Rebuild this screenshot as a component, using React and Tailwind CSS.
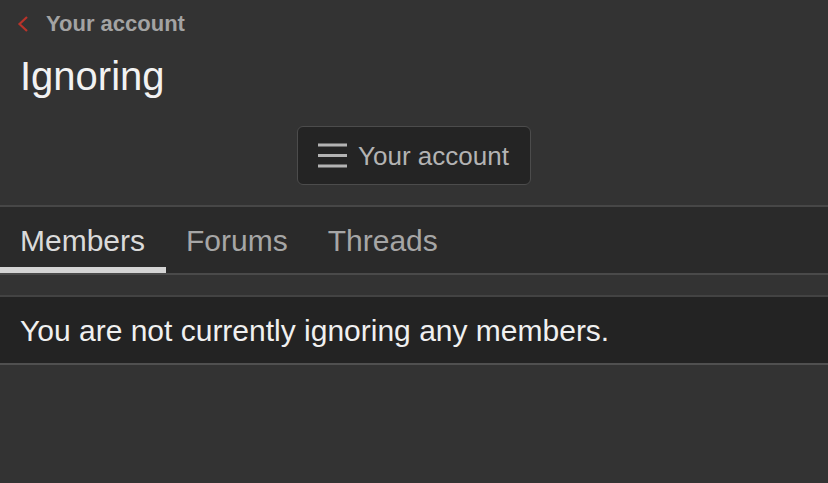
export default function App() {
  return (
    <div className="min-h-screen bg-[#333333] font-['Liberation_Sans',Arial,sans-serif]">
      {/* breadcrumb */}
      <div className="flex items-center h-[46px] pl-[16px] pr-5 pt-px">
        <svg width="14" height="18" viewBox="0 0 14 18" className="mr-[16px]">
          <path d="M11 2 L3.5 9 L11 16" fill="none" stroke="#b8332a" strokeWidth="2.2" />
        </svg>
        <span className="text-[22px] font-bold text-[#a3a3a3] leading-none">Your account</span>
      </div>

      {/* title */}
      <h1 className="px-5 text-[40px] leading-[60px] text-[#f2f2f2]">Ignoring</h1>

      {/* menu button */}
      <div className="flex justify-center pt-[20px] pb-[20px]">
        <button className="flex items-center h-[59px] pl-5 pr-[21px] gap-[11px] rounded-md bg-[#242424] border border-[#4c4c4c]">
          <svg width="29" height="25" viewBox="0 0 29 25">
            <rect x="0" y="0.5" width="29" height="3" fill="#b3b3b3" />
            <rect x="0" y="11" width="29" height="3" fill="#b3b3b3" />
            <rect x="0" y="21.5" width="29" height="3" fill="#b3b3b3" />
          </svg>
          <span className="text-[26px] text-[#b3b3b3] leading-none">Your account</span>
        </button>
      </div>

      {/* tabs */}
      <div className="border-t-2 border-[#474747] bg-[#2a2a2a] border-b-2 border-b-[#4a4a4a]">
        <div className="flex h-[66px]">
          <div className="flex items-center pl-5 pr-[21px] pt-[6px] border-b-[6px] border-[#d4d4d4] text-[30px] text-[#dadada]">
            Members
          </div>
          <div className="flex items-center px-5 pt-[6px] border-b-[6px] border-transparent text-[30px] text-[#a6a6a6]">
            Forums
          </div>
          <div className="flex items-center px-5 pt-[6px] border-b-[6px] border-transparent text-[30px] text-[#a6a6a6]">
            Threads
          </div>
        </div>
      </div>

      {/* message */}
      <div className="mt-[20px] border-t-2 border-[#434343] bg-[#232323] border-b-2 border-b-[#505050]">
        <p className="h-[66px] flex items-center px-5 text-[30px] text-[#f0f0f0]">
          You are not currently ignoring any members.
        </p>
      </div>
    </div>
  )
}
